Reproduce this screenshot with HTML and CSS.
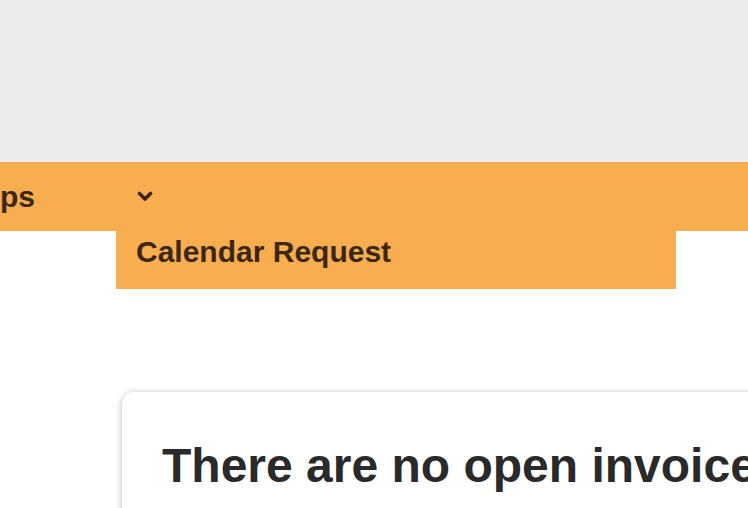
FILE: index.html
```html
<!DOCTYPE html>
<html>
<head>
<meta charset="utf-8">
<link rel="stylesheet" href="styles.css">
</head>
<body>
<div class="page">
  <header class="top-band"></header>
  <nav class="nav">
    <div class="nav-item nav-first">ps</div>
    <div class="nav-item nav-dropdown">
      <svg class="chevron" width="16" height="11" viewBox="0 0 16 11" aria-hidden="true">
        <path d="M2.5 2.5 L8 8 L13.5 2.5" fill="none" stroke="#3b2712" stroke-width="3.6" stroke-linecap="round" stroke-linejoin="round"/>
      </svg>
      <div class="dropdown-menu">
        <div class="dropdown-link">Calendar Request</div>
      </div>
    </div>
  </nav>
  <main class="content">
    <section class="card">
      <h1 class="card-title">There are no open invoices.</h1>
    </section>
  </main>
</div>
</body>
</html>
```
FILE: styles.css
```css
html, body {
  margin: 0;
  padding: 0;
  background: #ffffff;
  overflow: hidden;
}
body {
  width: 748px;
  height: 508px;
  font-family: "Liberation Sans", Arial, Helvetica, sans-serif;
}
.page {
  width: 748px;
  height: 508px;
  overflow: hidden;
}
.top-band {
  height: 162px;
  background: #ebecee;
}
.nav {
  height: 69px;
  background: #f8ad4f;
  display: flex;
  align-items: center;
  color: #3b2712;
  font-weight: bold;
  font-size: 30px;
}
.nav-item {
  display: flex;
  align-items: center;
  height: 100%;
}
.nav-first {
  width: 116px;
  flex: none;
}
.nav-dropdown {
  position: relative;
  padding-left: 21px;
}
.chevron {
  display: block;
}
.dropdown-menu {
  position: absolute;
  left: 0;
  top: 69px;
  width: 560px;
  height: 58px;
  background: #f8ad4f;
  box-sizing: border-box;
  padding: 4px 0 0 20px;
}
.dropdown-link {
  font-size: 30px;
  line-height: 34px;
  font-weight: bold;
  color: #3b2712;
  white-space: nowrap;
}
.content {
  padding: 161px 0 0 122px;
}
.card {
  width: 760px;
  height: 200px;
  background: #ffffff;
  border-radius: 12px;
  box-shadow: 0 1px 7px rgba(0, 0, 0, 0.28);
  box-sizing: border-box;
  padding: 45px 0 0 40px;
}
.card-title {
  margin: 0;
  font-size: 48px;
  line-height: 57px;
  font-weight: bold;
  color: #2a2a2a;
  white-space: nowrap;
}
```
